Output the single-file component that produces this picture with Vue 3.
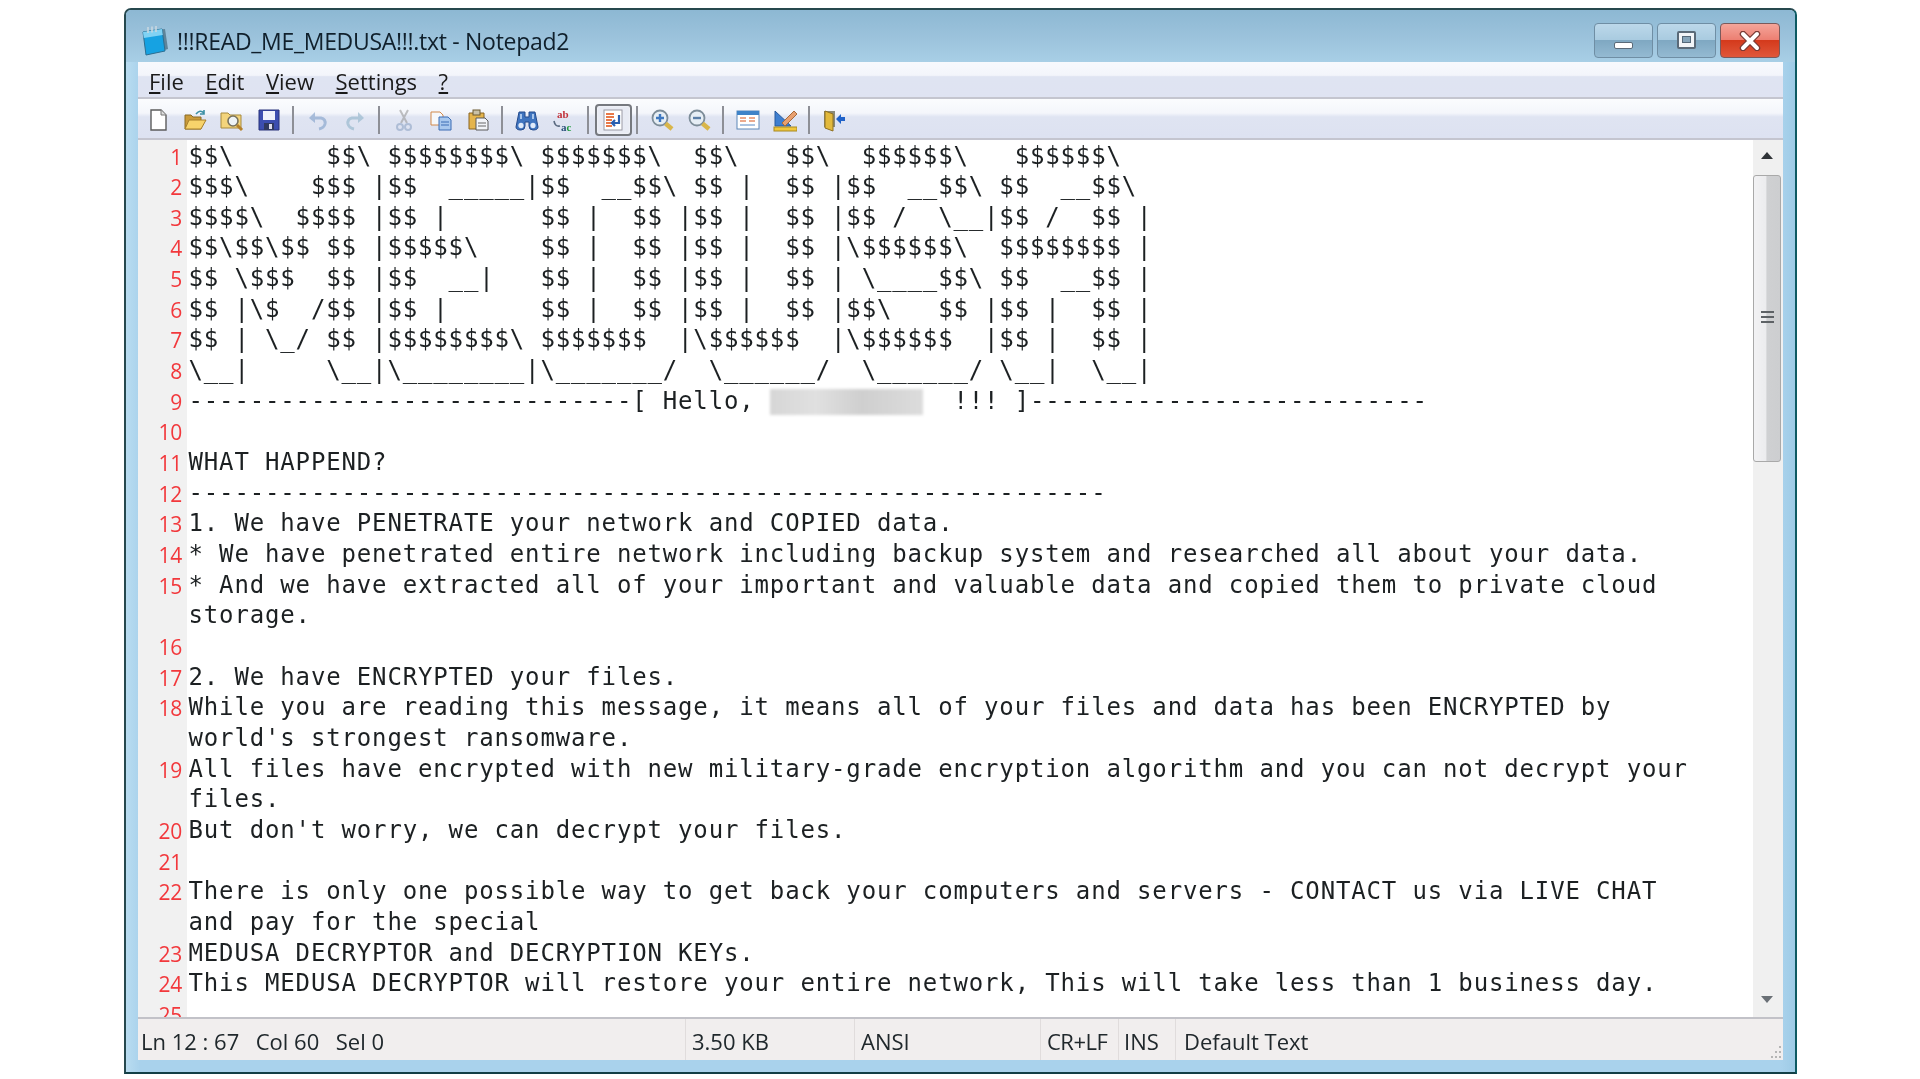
<script setup>
const rows = [
  { n: 1, t: String.raw`$$\      $$\ $$$$$$$$\ $$$$$$$\  $$\   $$\  $$$$$$\   $$$$$$\ ` },
  { n: 2, t: String.raw`$$$\    $$$ |$$  _____|$$  __$$\ $$ |  $$ |$$  __$$\ $$  __$$\ ` },
  { n: 3, t: String.raw`$$$$\  $$$$ |$$ |      $$ |  $$ |$$ |  $$ |$$ /  \__|$$ /  $$ |` },
  { n: 4, t: String.raw`$$\$$\$$ $$ |$$$$$\    $$ |  $$ |$$ |  $$ |\$$$$$$\  $$$$$$$$ |` },
  { n: 5, t: String.raw`$$ \$$$  $$ |$$  __|   $$ |  $$ |$$ |  $$ | \____$$\ $$  __$$ |` },
  { n: 6, t: String.raw`$$ |\$  /$$ |$$ |      $$ |  $$ |$$ |  $$ |$$\   $$ |$$ |  $$ |` },
  { n: 7, t: String.raw`$$ | \_/ $$ |$$$$$$$$\ $$$$$$$  |\$$$$$$  |\$$$$$$  |$$ |  $$ |` },
  { n: 8, t: String.raw`\__|     \__|\________|\_______/  \______/  \______/ \__|  \__|` },
  { n: 9, t: '-'.repeat(29) + '[ Hello, ', blur: true, after: '  !!! ]' + '-'.repeat(26) },
  { n: 10, t: '' },
  { n: 11, t: 'WHAT HAPPEND?' },
  { n: 12, t: '-'.repeat(60) },
  { n: 13, t: '1. We have PENETRATE your network and COPIED data.' },
  { n: 14, t: '* We have penetrated entire network including backup system and researched all about your data.' },
  { n: 15, t: '* And we have extracted all of your important and valuable data and copied them to private cloud' },
  { n: '', t: 'storage.' },
  { n: 16, t: '' },
  { n: 17, t: '2. We have ENCRYPTED your files.' },
  { n: 18, t: 'While you are reading this message, it means all of your files and data has been ENCRYPTED by' },
  { n: '', t: "world's strongest ransomware." },
  { n: 19, t: 'All files have encrypted with new military-grade encryption algorithm and you can not decrypt your' },
  { n: '', t: 'files.' },
  { n: 20, t: "But don't worry, we can decrypt your files." },
  { n: 21, t: '' },
  { n: 22, t: 'There is only one possible way to get back your computers and servers - CONTACT us via LIVE CHAT' },
  { n: '', t: 'and pay for the special' },
  { n: 23, t: 'MEDUSA DECRYPTOR and DECRYPTION KEYs.' },
  { n: 24, t: 'This MEDUSA DECRYPTOR will restore your entire network, This will take less than 1 business day.' },
  { n: 25, t: '' },
]
const menu = [
  { k: 'F', r: 'ile' },
  { k: 'E', r: 'dit' },
  { k: 'V', r: 'iew' },
  { k: 'S', r: 'ettings' },
  { k: '?', r: '' },
]
</script>

<template>
  <div class="page">
    <div class="window">
      <header class="titlebar">
        <svg class="appicon" viewBox="0 0 28 32">
          <path d="M7 6 L24 4 L27 24 L10 29 Z" fill="#5f8499" />
          <path d="M2 7 L21 4 L24 26 L5 30 Z" fill="#16a2e2" stroke="#2c6f92" stroke-width="1" />
          <path d="M2 7 L21 4 L21.800 10 L2.800 13 Z" fill="#7fd2f4" />
          <path d="M7 2 v6 M11 1.500 v6 M15 1 v6" stroke="#c8d8e0" stroke-width="1.600" />
        </svg>
        <span class="title">!!!READ_ME_MEDUSA!!!.txt - Notepad2</span>
        <div class="controls">
          <button class="ctl"><span class="glyph-min"></span></button>
          <button class="ctl"><span class="glyph-max"></span></button>
          <button class="ctl close">
            <svg viewBox="0 0 24 20" class="x"><path d="M5 3 L19 17 M19 3 L5 17" stroke="#7a3a34" stroke-width="6.500" stroke-linecap="round" /><path d="M5 3 L19 17 M19 3 L5 17" stroke="#fff" stroke-width="4" stroke-linecap="round" /></svg>
          </button>
        </div>
      </header>

      <div class="client">
        <nav class="menubar">
          <span v-for="m in menu" :key="m.k" class="menuitem"><u>{{ m.k }}</u>{{ m.r }}</span>
        </nav>

        <div class="toolbar">
          <span class="tb"><svg viewBox="0 0 24 24"><path d="M5 2 H15 L20 7 V22 H5 Z" fill="#fff" stroke="#5c5c5c" stroke-width="1.400" /><path d="M15 2 V7 H20" fill="#ddd" stroke="#777" stroke-width="1" /></svg></span>
          <span class="tb"><svg viewBox="0 0 24 24"><path d="M2 21 V7 H8 L10 9 H18 V21 Z" fill="#c99a3a" stroke="#8a6a24" /><path d="M2 21 L6 12 H23 L18 21 Z" fill="#f7d36b" stroke="#a67e2a" /><path d="M13 6 Q17 1 21 5 M21 2 V6 H17" fill="none" stroke="#3b8fa5" stroke-width="1.600" /></svg></span>
          <span class="tb"><svg viewBox="0 0 24 24"><path d="M1 20 V5 H8 L10 7 H21 V20 Z" fill="#f3d47c" stroke="#a78a3c" /><circle cx="13" cy="13" r="5" fill="#eef3f6" stroke="#77725e" stroke-width="1.600" /><path d="M17 17 L22 22" stroke="#b5812a" stroke-width="3" /></svg></span>
          <span class="tb"><svg viewBox="0 0 24 24"><path d="M2 2 H22 V22 H2 Z" fill="#3c4eb0" stroke="#28327a" /><rect x="6" y="3" width="12" height="9" fill="#eef2fb" /><rect x="7" y="15" width="10" height="7" fill="#30395f" /><rect x="12" y="16" width="3" height="5" fill="#dde" /></svg></span>
          <i class="sep"></i>
          <span class="tb faded"><svg viewBox="0 0 24 24"><path d="M5 10 H15 Q20 11 19 16 Q18 20 13 21" fill="none" stroke="#7f9fc9" stroke-width="3" /><path d="M3 10 L9 4 V15 Z" fill="#7f9fc9" /></svg></span>
          <span class="tb faded"><svg viewBox="0 0 24 24"><path d="M19 10 H9 Q4 11 5 16 Q6 20 11 21" fill="none" stroke="#8fb3c9" stroke-width="3" /><path d="M21 10 L15 4 V15 Z" fill="#8fb3c9" /></svg></span>
          <i class="sep"></i>
          <span class="tb faded"><svg viewBox="0 0 24 24"><path d="M8 2 L15 15 M16 2 L9 15" stroke="#9a9a9a" stroke-width="2" /><circle cx="8" cy="19" r="3" fill="none" stroke="#8fa5c5" stroke-width="2" /><circle cx="16" cy="19" r="3" fill="none" stroke="#8fa5c5" stroke-width="2" /></svg></span>
          <span class="tb"><svg viewBox="0 0 24 24"><path d="M2 4 H11 L14 7 V17 H2 Z" fill="#f6f8fb" stroke="#d2894a" /><path d="M10 9 H19 L22 12 V22 H10 Z" fill="#a9c8ee" stroke="#3a6db5" /><path d="M12 14 H20 M12 17 H20" stroke="#3a6db5" /></svg></span>
          <span class="tb"><svg viewBox="0 0 24 24"><path d="M3 5 H18 V21 H3 Z" fill="#e4b44c" stroke="#8a6420" /><rect x="7" y="2" width="7" height="5" fill="#c9c1a8" stroke="#6c5a30" /><path d="M10 10 H19 L22 13 V22 H10 Z" fill="#f2f4f8" stroke="#5a5a5a" /><path d="M12 15 H20 M12 18 H20" stroke="#666" /></svg></span>
          <i class="sep"></i>
          <span class="tb"><svg viewBox="0 0 24 24"><path d="M4 4 H10 V9 H14 V4 H20 L23 19 Q23 22 18 22 Q14 22 14 18 V14 H10 V18 Q10 22 6 22 Q1 22 1 19 Z" fill="#3f74bf" stroke="#244a8c" stroke-width="1" /><ellipse cx="6" cy="17.500" rx="2.600" ry="2.800" fill="#dfeafa" /><ellipse cx="18" cy="17.500" rx="2.600" ry="2.800" fill="#dfeafa" /><path d="M6 6 V11 M18 6 V11" stroke="#a9c6ec" stroke-width="2" /></svg></span>
          <span class="tb"><svg viewBox="0 0 24 24"><text x="5" y="9.500" class="ab">ab</text><text x="9" y="23" class="ac">a<tspan fill="#1f9a3c">c</tspan></text><path d="M2 13 Q3 19 8 18" fill="none" stroke="#5a6a80" stroke-width="1.600" /></svg></span>
          <i class="sep"></i>
          <span class="tb pressed"><svg viewBox="0 0 24 24"><rect x="3" y="2" width="18" height="20" fill="#fff" stroke="#9a9aa4" /><path d="M5 6 H13 M5 9 H13 M5 12 H11 M5 15 H11 M5 18 H11" stroke="#e8794a" stroke-width="1.800" /><path d="M18 7 V15 H12 M14 12 L11 15 L14 18" fill="none" stroke="#2a5fb0" stroke-width="2.200" /></svg></span>
          <i class="sep"></i>
          <span class="tb"><svg viewBox="0 0 24 24"><circle cx="10" cy="10" r="7.500" fill="#e6eef5" stroke="#7d8d99" stroke-width="1.800" /><path d="M6 10 H14 M10 6 V14" stroke="#3f78c0" stroke-width="2.400" /><path d="M15.500 15.500 L22 21" stroke="#d9b64a" stroke-width="4.500" /></svg></span>
          <span class="tb"><svg viewBox="0 0 24 24"><circle cx="10" cy="10" r="7.500" fill="#e6eef5" stroke="#7d8d99" stroke-width="1.800" /><path d="M6 10 H14" stroke="#5b7fa8" stroke-width="2.400" /><path d="M15.500 15.500 L22 21" stroke="#d9b64a" stroke-width="4.500" /></svg></span>
          <i class="sep"></i>
          <span class="tb"><svg viewBox="0 0 24 24"><rect x="1" y="3" width="22" height="18" fill="#fff" stroke="#5c87b8" /><rect x="1" y="3" width="22" height="4" fill="#3f83c8" /><path d="M4 10 H10 M4 13 H10 M13 10 H19 M13 13 H19" stroke="#e58f6a" stroke-width="1.500" /><path d="M4 17 H19" stroke="#8fb0d8" stroke-width="1.500" /></svg></span>
          <span class="tb"><svg viewBox="0 0 24 24"><path d="M2 3 L18 18 H2 Z" fill="#3f7fd0" stroke="#285a9e" /><path d="M9 15 L21 3 L24 6 L12 18 Z" fill="#e8a070" stroke="#a86a3a" /><rect x="1" y="19" width="23" height="4" fill="#f0c63c" stroke="#a88a20" /></svg></span>
          <i class="sep"></i>
          <span class="tb"><svg viewBox="0 0 24 24"><path d="M2 3 H13 V19 H2 Z" fill="#8a8a7a" /><path d="M3 3 L11 6 V23 L3 20 Z" fill="#e2b93c" stroke="#8e7020" /><path d="M14 11 L19 6 V9 H23 V13 H19 V16 Z" fill="#1f62c9" /></svg></span>
        </div>

        <div class="body">
          <div class="editor">
            <div v-for="(r, i) in rows" :key="i" class="row">
              <span class="num">{{ r.n }}</span>
              <span class="text">{{ r.t }}<span v-if="r.blur" class="redacted"></span><template v-if="r.blur">{{ r.after }}</template></span>
            </div>
          </div>
          <aside class="scrollbar">
            <span class="arrow up"></span>
            <div class="thumb"><i></i><i></i><i></i></div>
            <span class="spacer"></span>
            <span class="arrow down"></span>
          </aside>
        </div>

        <footer class="status">
          <span class="cell c1"><span>Ln 12 : 67</span><span>Col 60</span><span>Sel 0</span></span>
          <span class="cell c2">3.50 KB</span>
          <span class="cell c3">ANSI</span>
          <span class="cell c4">CR+LF</span>
          <span class="cell c5">INS</span>
          <span class="cell c6">Default Text</span>
          <svg class="grip" viewBox="0 0 16 16"><path d="M13 3h2v2h-2zM9 8h2v2H9zM13 8h2v2h-2zM5 13h2v2H5zM9 13h2v2H9zM13 13h2v2h-2z" fill="#b5b5b5" /></svg>
        </footer>
      </div>
    </div>
  </div>
</template>

<style>
html, body { background: #fff; margin: 0; }
</style>

<style scoped>
.page {
  width: 1920px;
  height: 1079px;
  overflow: hidden;
  padding: 8px 0 0 124px;
  box-sizing: border-box;
  background: #fff;
}
.window {
  width: 1673px;
  height: 1066px;
  box-sizing: border-box;
  border: 2px solid #26484e;
  border-right-color: #0d5a62;
  border-bottom-color: #123f46;
  border-radius: 7px 7px 0 0;
  background: linear-gradient(90deg, #b9dcf0 0, #a9d2ec 14px, #a9d2ec calc(100% - 14px), #9ecbe6 100%);
  padding: 0 12px 12px 12px;
  display: flex;
  flex-direction: column;
  filter: blur(0.45px);
  position: relative;
}
.titlebar {
  height: 52px;
  box-sizing: border-box;
  margin: 0 -12px;
  padding: 9px 15px 0 15px;
  display: flex;
  align-items: center;
  background: linear-gradient(180deg, #8db8d3 0, #9cc3dc 55%, #a8cfe6 100%);
  border-radius: 5px 5px 0 0;
  font-family: "Open Sans", "Liberation Sans", sans-serif;
}
.appicon { width: 28px; height: 32px; flex: none; }
.title {
  margin-left: 8px;
  font-size: 23px;
  letter-spacing: -0.3px;
  color: #10202c;
}
.controls {
  margin-left: auto;
  display: flex;
  gap: 4px;
  align-self: flex-start;
  margin-top: 4px;
}
.ctl {
  width: 59px;
  height: 35px;
  padding: 0;
  border: 1.500px solid #6f8ea4;
  border-radius: 4px;
  background: linear-gradient(180deg, #bcd8ea 0, #a9cbe0 48%, #7fa8c2 50%, #94bad2 100%);
  display: flex;
  align-items: center;
  justify-content: center;
  position: relative;
}
.close {
  width: 60px;
  border-color: #7a5a5c;
  background: linear-gradient(180deg, #f4a59a 0, #ec7f72 48%, #d43a1c 50%, #e0573a 100%);
}
.glyph-min {
  width: 19px;
  height: 7px;
  margin-top: 9px;
  background: #fff;
  border: 1.500px solid #5a6a78;
  border-radius: 2px;
  box-sizing: border-box;
}
.glyph-max {
  width: 19px;
  height: 18px;
  margin-top: -1px;
  background: #f2f5f8;
  border: 2px solid #5a6a78;
  border-radius: 2px;
  box-sizing: border-box;
  position: relative;
}
.glyph-max::after {
  content: "";
  position: absolute;
  left: 3px;
  top: 3px;
  width: 9px;
  height: 7px;
  background: #86a5ba;
  border: 1px solid #55697a;
  box-sizing: border-box;
}
.x { width: 24px; height: 20px; }
.client {
  flex: 1;
  min-height: 0;
  display: flex;
  flex-direction: column;
  background: #fff;
}
.menubar {
  height: 37px;
  box-sizing: border-box;
  display: flex;
  align-items: center;
  padding: 2px 0 0 11px;
  background: linear-gradient(180deg, #f7f9fd 0, #f3f5fb 38%, #dfe4f2 42%, #dfe3f2 100%);
  border-bottom: 2px solid #c4c5cf;
  font-family: "Open Sans", "Liberation Sans", sans-serif;
  font-size: 22px;
  color: #1a1a1a;
}
.menuitem { margin-right: 21.500px; }
.toolbar {
  height: 41px;
  box-sizing: border-box;
  display: flex;
  align-items: center;
  padding: 2px 0 0 1.500px;
  background: linear-gradient(180deg, #fbfcfe 0, #f4f6fb 36%, #dfe4f2 46%, #dde2f1 100%);
  border-bottom: 2px solid #c4c5cf;
}
.tb {
  width: 37px;
  height: 32px;
  box-sizing: border-box;
  display: flex;
  align-items: center;
  justify-content: center;
  flex: none;
}
.tb svg { width: 24px; height: 24px; }
.ab { font: bold 11px "Liberation Serif", serif; fill: #c2323a; }
.ac { font: bold 11px "Liberation Serif", serif; fill: #2a4f7a; }
.faded { opacity: 0.6; }
.pressed {
  border: 2.500px solid #76797f;
  border-radius: 4px;
  background: #e8ebf4;
  box-shadow: inset 0 0 2px #fff;
}
.sep {
  width: 12px;
  height: 28px;
  flex: none;
  box-sizing: border-box;
  background: linear-gradient(#8d8f96, #8d8f96) 4px 0 / 2px 100% no-repeat;
}
.body {
  flex: 1;
  min-height: 0;
  display: flex;
}
.editor {
  flex: 1;
  min-width: 0;
  overflow: hidden;
  padding-top: 0.5px;
  background: linear-gradient(90deg, #f1f1f1 49px, #fff 49px);
}
.row {
  display: flex;
  height: 30.660px;
  line-height: 30.660px;
}
.num {
  width: 44px;
  padding-right: 5px;
  flex: none;
  text-align: right;
  color: #f2383c;
  font-family: "Open Sans", "Liberation Sans", sans-serif;
  font-size: 21px;
  padding-top: 1px;
  letter-spacing: -0.3px;
}
.text {
  white-space: pre;
  padding-left: 1.500px;
  font-family: "DejaVu Sans Mono", monospace;
  font-size: 24px;
  letter-spacing: 0.85px;
  color: #1c2022;
}
.redacted {
  display: inline-block;
  width: 153px;
  height: 26px;
  vertical-align: middle;
  background: linear-gradient(90deg, #d6d6d6, #e0e0e0 30%, #cfcfcf 60%, #dcdcdc);
  filter: blur(1.500px);
}
.scrollbar {
  width: 30px;
  flex: none;
  background: #f0f0f0;
  display: flex;
  flex-direction: column;
  align-items: stretch;
}
.arrow {
  height: 35px;
  flex: none;
  position: relative;
}
.arrow::after {
  content: "";
  position: absolute;
  left: 8px;
  border-left: 6.500px solid transparent;
  border-right: 6.500px solid transparent;
}
.up::after { top: 12px; border-bottom: 7px solid #303438; }
.down { height: 36px; }
.down::after { top: 15px; border-top: 7px solid #6a7076; }
.thumb {
  height: 287px;
  margin-right: 2px;
  padding-bottom: 3px;
  flex: none;
  box-sizing: border-box;
  border: 1.500px solid #a9a9a9;
  border-radius: 3px;
  background: linear-gradient(90deg, #f2f2f4 0, #ececee 45%, #cfd0d2 50%, #cdced0 100%);
  display: flex;
  flex-direction: column;
  align-items: center;
  justify-content: center;
  gap: 3px;
}
.thumb i { width: 13px; height: 2px; background: #5e6266; }
.spacer { flex: 1; }
.status {
  height: 43px;
  flex: none;
  box-sizing: border-box;
  border-top: 2px solid #c2c2c8;
  background: #f1eeee;
  display: flex;
  align-items: stretch;
  position: relative;
  font-family: "Open Sans", "Liberation Sans", sans-serif;
  font-size: 22px;
  color: #20282c;
}
.cell {
  display: flex;
  align-items: center;
  box-sizing: border-box;
  padding: 2px 0 0 3px;
  white-space: pre;
  border-right: 1.500px solid #e0dcdc;
}
.c1 { width: 548px; gap: 16.500px; }
.c2 { width: 169px; padding-left: 6px; }
.c3 { width: 186px; padding-left: 6px; }
.c4 { width: 78px; padding-left: 6px; letter-spacing: -0.5px; }
.c5 { width: 57px; padding-left: 5px; }
.c6 { border-right: 0; padding-left: 8px; }
.grip { position: absolute; right: 1px; bottom: 1px; width: 16px; height: 16px; }
</style>
